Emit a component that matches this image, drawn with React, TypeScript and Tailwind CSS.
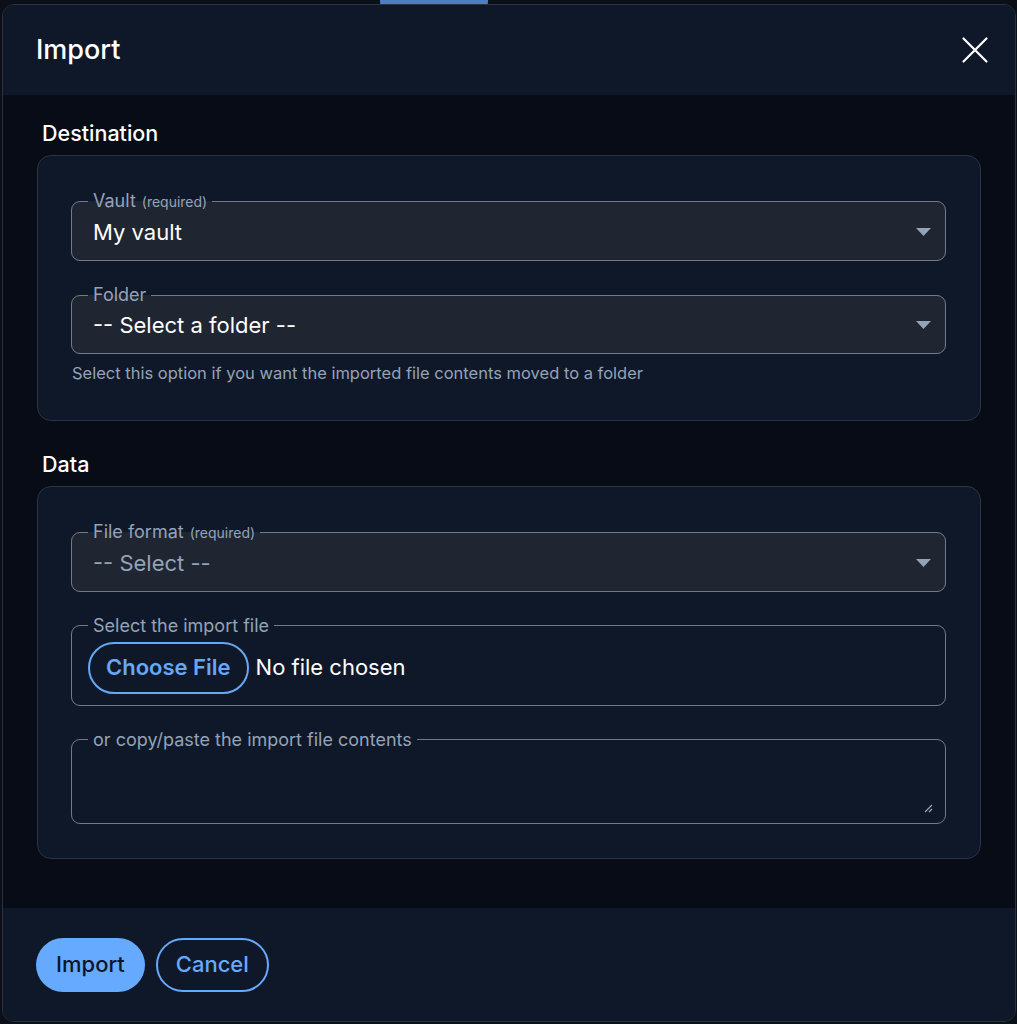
import type { ReactNode } from "react";

const font = { fontFamily: "Inter, 'Noto Sans', sans-serif" };

function Caret() {
  return (
    <svg width="15" height="8" viewBox="0 0 15 8" className="shrink-0">
      <path d="M0 0 H15 L7.5 8 Z" fill="#94a3b8" />
    </svg>
  );
}

function Field({
  label,
  required,
  filled,
  children,
}: {
  label: string;
  required?: boolean;
  filled?: boolean;
  children: ReactNode;
}) {
  return (
    <fieldset
      className={`-ml-px rounded-[9px] border border-[#6f7b8c] pl-[16px] pr-[14px] pb-[14px] ${
        filled ? "bg-[#1f2531]" : ""
      }`}
    >
      <legend className="px-[5px] text-[18px] leading-[20px] text-[#94a3b8]">
        {label}
        {required ? (
          <span className="ml-[6px] text-[14px]">(required)</span>
        ) : null}
      </legend>
      <div className="pl-[5px]">{children}</div>
    </fieldset>
  );
}

function SelectField({
  label,
  required,
  value,
  muted,
}: {
  label: string;
  required?: boolean;
  value: string;
  muted?: boolean;
}) {
  return (
    <Field label={label} required={required} filled>
      <div className="mt-[6px] flex h-[28px] items-center justify-between">
        <span
          className={`text-[22px] leading-[28px] ${
            muted ? "text-[#94a3b8]" : "text-white"
          }`}
        >
          {value}
        </span>
        <Caret />
      </div>
    </Field>
  );
}

function Section({ title, children }: { title: string; children: ReactNode }) {
  return (
    <section className="flex flex-col">
      <h2 className="pl-[5px] text-[21.5px] font-medium leading-[28px] text-white">
        {title}
      </h2>
      <div className="mt-[8px] flex flex-col gap-[24px] rounded-[14px] border border-[#2b3545] bg-[#0f1828] px-[34px] pt-[35px] pb-[34px]">
        {children}
      </div>
    </section>
  );
}

export default function App() {
  return (
    <div style={font} className="relative h-[1024px] w-[1017px] overflow-hidden bg-[#0b0f17]">
      <div className="absolute left-[380px] top-0 h-[6px] w-[108px] rounded-b-[4px] bg-[#4a7fc4]" />
      <div className="absolute left-[2px] top-[4px] flex h-[1018px] w-[1014px] flex-col overflow-hidden rounded-[12px] border border-[#2a3341] bg-[#070c16]">
        <header className="flex h-[90px] shrink-0 items-center justify-between bg-[#0f1828] pl-[33px] pr-[26px]">
          <h1 className="text-[27px] font-medium text-white">Import</h1>
          <button type="button" className="text-white">
            <svg width="28" height="28" viewBox="0 0 28 28">
              <path
                d="M2.5 2.5 L25.5 25.5 M25.5 2.5 L2.5 25.5"
                stroke="currentColor"
                strokeWidth="2.2"
                strokeLinecap="round"
              />
            </svg>
          </button>
        </header>

        <main className="flex flex-1 flex-col gap-[29px] px-[34px] pt-[24px]">
          <Section title="Destination">
            <SelectField label="Vault" required value="My vault" />
            <div className="flex flex-col gap-[7px]">
              <SelectField label="Folder" value="-- Select a folder --" />
              <p className="text-[16.5px] text-[#94a3b8]">
                Select this option if you want the imported file contents moved to a folder
              </p>
            </div>
          </Section>

          <Section title="Data">
            <SelectField label="File format" required value="-- Select --" muted />
            <Field label="Select the import file">
              <div className="mt-[6px] -mb-[3px] -ml-[5px] flex items-center gap-[7px]">
                <button
                  type="button"
                  className="h-[52px] rounded-full border-2 border-[#66a8f6] px-[16px] text-[22px] font-semibold text-[#66a8f6]"
                >
                  Choose File
                </button>
                <span className="text-[22px] text-white">No file chosen</span>
              </div>
            </Field>
            <Field label="or copy/paste the import file contents">
              <div className="relative h-[59px]">
                <svg
                  width="10"
                  height="10"
                  viewBox="0 0 10 10"
                  className="absolute bottom-[-4px] right-[-2px]"
                >
                  <path d="M9 2 L2 9 M9 6 L6 9" stroke="#9aa4b2" strokeWidth="1.2" />
                </svg>
              </div>
            </Field>
          </Section>
        </main>

        <footer className="flex h-[113px] shrink-0 items-center gap-[11px] bg-[#0f1828] px-[33px]">
          <button
            type="button"
            className="h-[54px] rounded-full bg-[#66aaff] px-[20px] text-[22px] font-medium text-[#0c1626]"
          >
            Import
          </button>
          <button
            type="button"
            className="h-[54px] rounded-full border-2 border-[#66aaff] px-[18px] text-[22px] font-medium text-[#66aaff]"
          >
            Cancel
          </button>
        </footer>
      </div>
    </div>
  );
}
